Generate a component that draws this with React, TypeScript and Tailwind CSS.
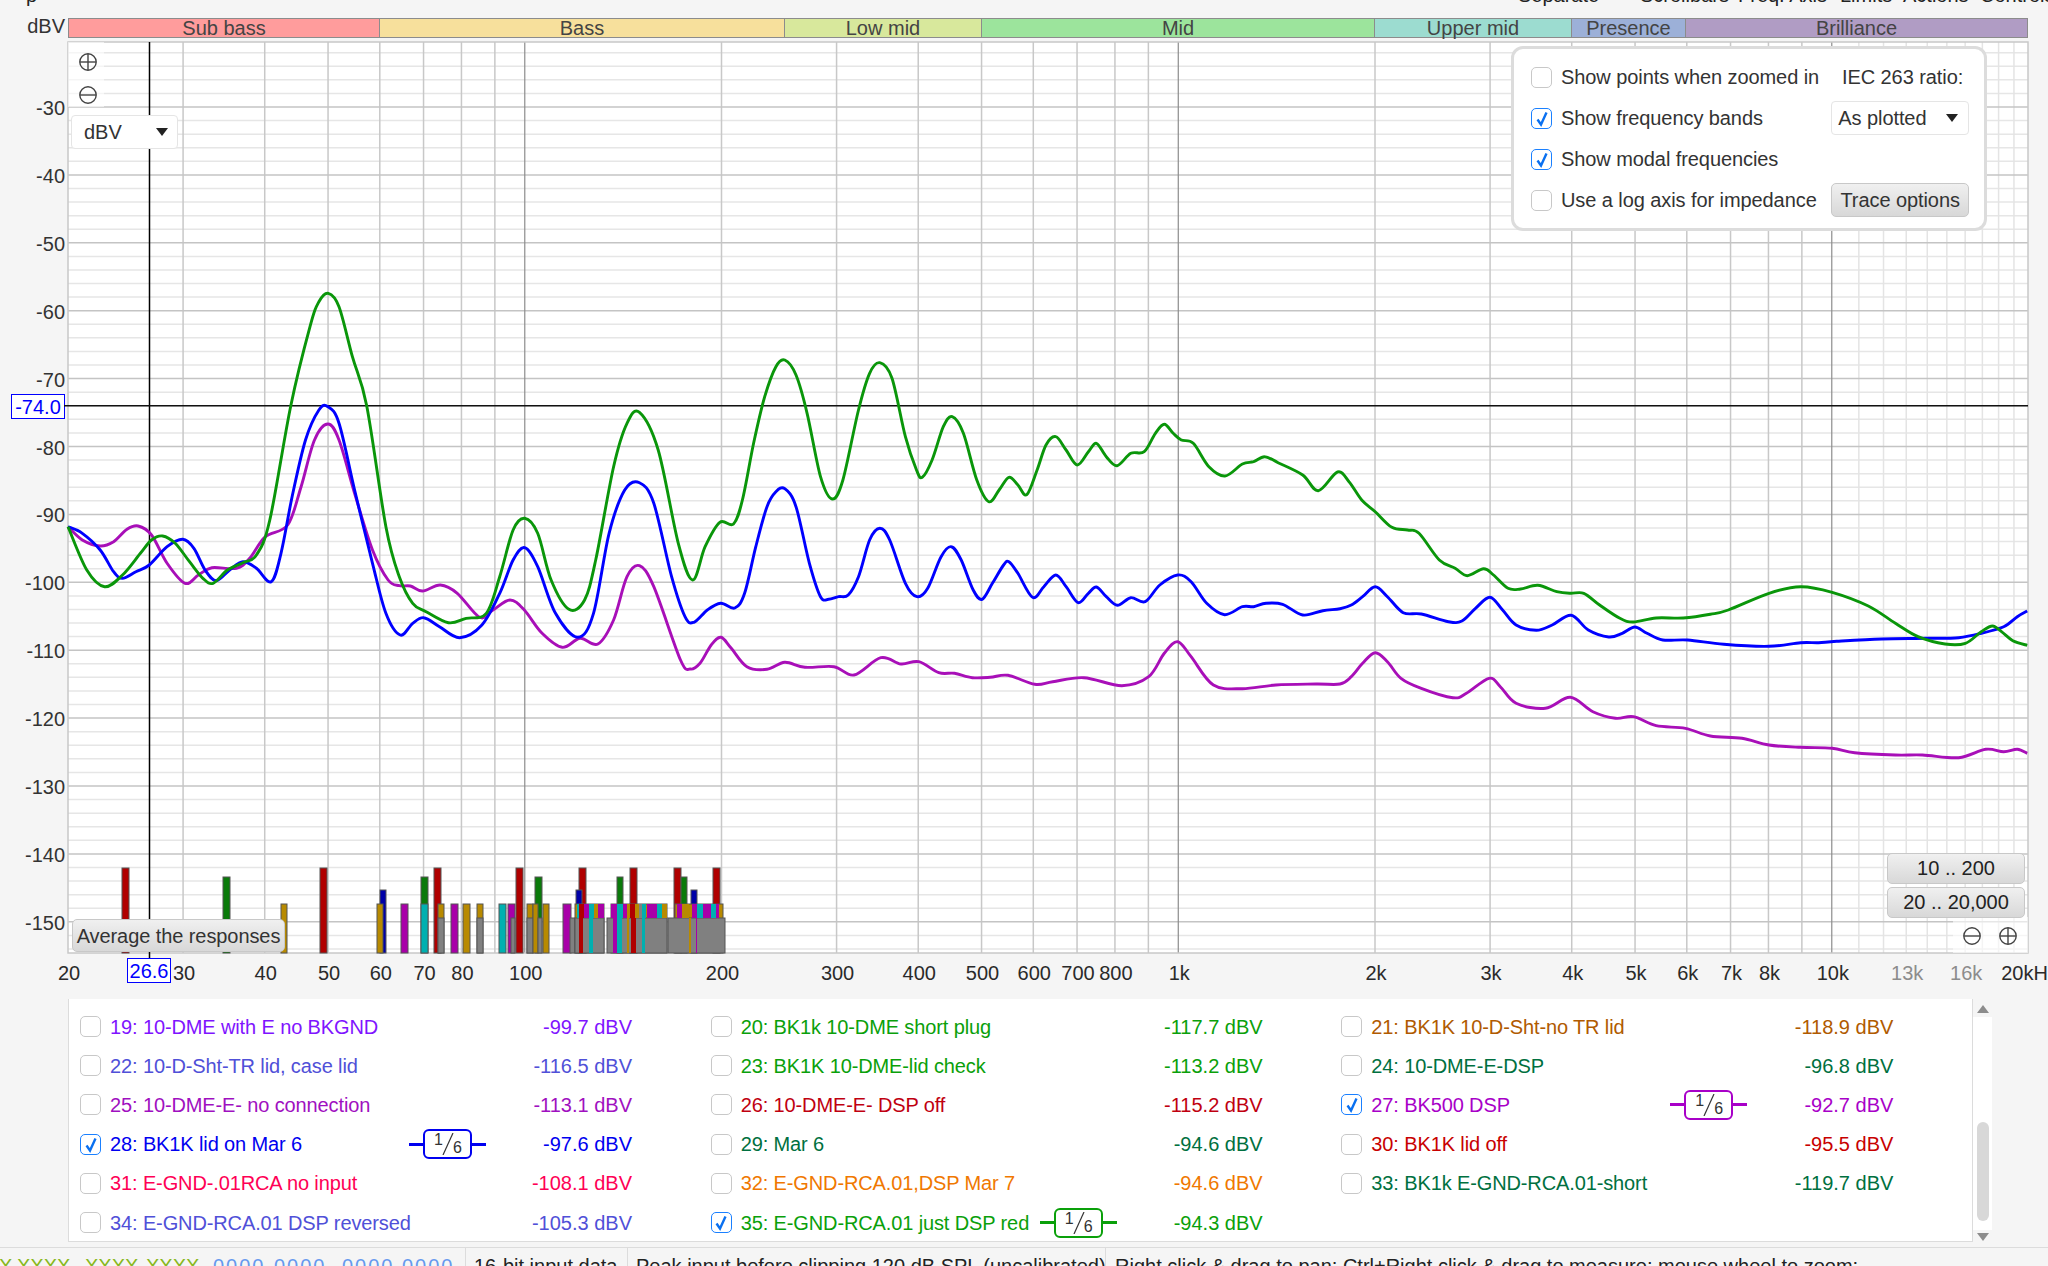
import React from 'react';

// plot geometry in page pixels
const PLOT_LEFT = 68;
const PLOT_RIGHT = 2028;
const PLOT_TOP = 42;
const PLOT_BOTTOM = 953;

const fx = (f: number) => 68 + 653.5 * Math.log10(f / 20);
const dy = (db: number) => 107 + (-30 - db) * 6.79;

const BANDS = [
  { name: 'Sub bass', cls: 'w-[312px] bg-[#ff9c9c]' },
  { name: 'Bass', cls: 'w-[405px] bg-[#f7e09c]' },
  { name: 'Low mid', cls: 'w-[197px] bg-[#d8e89c]' },
  { name: 'Mid', cls: 'w-[393px] bg-[#9ce49c]' },
  { name: 'Upper mid', cls: 'w-[197px] bg-[#9cdcd0]' },
  { name: 'Presence', cls: 'w-[114px] bg-[#9cb0d8]' },
  { name: 'Brilliance', cls: 'w-[342px] bg-[#b09cc4]' },
];

const X_TICKS: { t: string; f: number; dim?: boolean }[] = [
  { t: '20', f: 20 }, { t: '30', f: 30 }, { t: '40', f: 40 }, { t: '50', f: 50 }, { t: '60', f: 60 },
  { t: '70', f: 70 }, { t: '80', f: 80 }, { t: '100', f: 100 }, { t: '200', f: 200 }, { t: '300', f: 300 },
  { t: '400', f: 400 }, { t: '500', f: 500 }, { t: '600', f: 600 }, { t: '700', f: 700 }, { t: '800', f: 800 },
  { t: '1k', f: 1000 }, { t: '2k', f: 2000 }, { t: '3k', f: 3000 }, { t: '4k', f: 4000 }, { t: '5k', f: 5000 },
  { t: '6k', f: 6000 }, { t: '7k', f: 7000 }, { t: '8k', f: 8000 }, { t: '10k', f: 10000 },
  { t: '13k', f: 13000, dim: true }, { t: '16k', f: 16000, dim: true }, { t: '20kHz', f: 20000 },
];

// traces were read off three crops of the reference, so each run keeps its crop's origin
type Run = { ox: number; oy: number; sx: number; p: number[] };
const toPoints = (runs: Run[]) =>
  runs.flatMap((r) => {
    const out: [number, number][] = [];
    for (let i = 0; i < r.p.length; i += 2) out.push([r.ox + r.p[i] / r.sx, r.oy + r.p[i + 1] / 3]);
    return out;
  });

const A = { ox: 60, oy: 260, sx: 2.24 };
const B = { ox: 700, oy: 320, sx: 2.24 };
const C = { ox: 1340, oy: 480, sx: 2.2147 };

const GREEN = toPoints([
  { ...A, p: [18,800,60,930,100,980,140,945,180,880,205,840,230,828,258,850,290,905,320,955,343,970,375,930,410,908,440,885,470,780,517,437,560,200,580,125,601,100,625,140,655,290,687,437,730,800,760,950,790,1030,820,1055,870,1088,910,1075,955,1060,985,950,1015,810,1041,775,1070,820,1100,960,1140,1048,1175,1020,1200,900,1240,620,1270,490,1298,457,1340,570,1385,850,1417,960,1445,860,1478,787] },
  { ...B, p: [75,612,95,540,120,370,145,230,170,140,190,120,215,165,240,280,270,470,296,537,320,480,355,270,380,160,403,128,430,175,460,350,485,450,498,472,520,420,545,320,565,290,590,340,620,480,647,545,670,510,692,472,712,495,732,524,755,450,775,375,797,350,820,390,845,435,870,395,888,370,910,410,934,437,965,400,995,395,1020,340,1040,313,1060,340,1078,360,1105,370,1140,440,1176,468,1215,432,1240,425,1265,410,1295,428,1350,465,1385,512,1428,456] },
  { ...C, p: [20,5,48,60,78,95,115,142,150,150,175,160,220,240,255,265,282,287,318,266,340,285,372,325,400,327,438,316,480,335,510,340,540,340,575,375,620,415,650,426,700,414,760,414,820,403,860,390,950,340,1020,320,1090,337,1170,378,1230,430,1280,470,1340,492,1385,490,1420,455,1445,438,1465,455,1490,482,1522,496] },
]);

const BLUE = toPoints([
  { ...A, p: [18,800,50,820,90,870,120,935,140,955,170,935,200,915,240,860,275,838,300,865,325,930,350,962,380,930,410,905,440,925,473,965,495,880,520,710,550,540,580,450,600,440,625,490,660,690,700,910,730,1060,762,1125,790,1090,815,1073,850,1100,895,1133,945,1095,985,1000,1015,900,1041,863,1070,920,1110,1060,1160,1132,1195,1060,1230,820,1265,690,1298,668,1330,730,1370,950,1400,1070,1420,1087,1450,1050,1480,1030] },
  { ...B, p: [78,864,100,820,125,680,150,560,170,515,190,506,215,560,245,730,270,830,288,838,310,830,332,825,355,770,380,660,403,625,425,660,460,790,486,830,510,805,540,710,563,680,585,720,612,810,632,838,655,790,680,735,692,725,712,760,745,832,770,800,797,765,820,800,847,848,870,820,888,801,910,830,935,856,965,833,997,845,1030,795,1070,765,1100,785,1135,850,1175,884,1215,860,1240,860,1268,850,1305,853,1350,885,1395,872] },
  { ...C, p: [0,386,25,375,50,350,78,320,105,350,140,398,180,402,240,425,270,423,300,385,332,352,360,390,390,435,435,451,470,435,512,406,550,450,595,471,625,460,653,441,680,460,715,480,770,480,850,493,950,499,1020,488,1060,488,1100,484,1200,477,1300,475,1370,473,1420,460,1470,440,1500,410,1522,393] },
]);

const PURPLE = toPoints([
  { ...A, p: [18,800,50,840,90,858,120,845,150,808,175,798,205,825,240,910,280,970,310,945,340,923,395,925,425,895,460,830,510,795,540,680,570,540,600,492,625,540,660,700,700,870,735,960,760,977,785,978,812,993,852,975,890,1000,940,1072,970,1050,1008,1020,1040,1050,1080,1120,1125,1162,1165,1135,1205,1152,1240,1080,1270,950,1298,917,1330,980,1390,1200,1412,1227] },
  { ...B, p: [0,1030,25,975,47,952,70,985,105,1040,150,1048,190,1027,235,1042,300,1040,345,1065,405,1013,450,1032,490,1025,535,1058,570,1060,610,1073,650,1072,690,1066,750,1093,790,1085,860,1073,945,1097,1005,1070,1040,1000,1070,965,1100,1010,1150,1095,1215,1106,1290,1095,1380,1092] },
  { ...C, p: [0,612,25,590,50,550,78,518,105,545,135,595,180,625,250,653,280,640,330,595,355,620,390,670,455,685,510,652,560,695,610,715,650,710,700,737,765,745,820,768,890,775,950,795,1020,802,1090,805,1140,818,1230,825,1290,825,1370,833,1430,808,1470,815,1500,808,1522,820] },
]);

// catmull-rom through the read points
function smooth(pts: [number, number][]) {
  let d = `M${pts[0][0].toFixed(1)} ${pts[0][1].toFixed(1)}`;
  for (let i = 0; i < pts.length - 1; i++) {
    const p0 = pts[Math.max(i - 1, 0)];
    const p1 = pts[i];
    const p2 = pts[i + 1];
    const p3 = pts[Math.min(i + 2, pts.length - 1)];
    const c1x = p1[0] + (p2[0] - p0[0]) / 6;
    const c1y = p1[1] + (p2[1] - p0[1]) / 6;
    const c2x = p2[0] - (p3[0] - p1[0]) / 6;
    const c2y = p2[1] - (p3[1] - p1[1]) / 6;
    d += `C${c1x.toFixed(1)} ${c1y.toFixed(1)} ${c2x.toFixed(1)} ${c2y.toFixed(1)} ${p2[0].toFixed(1)} ${p2[1].toFixed(1)}`;
  }
  return d;
}

const RED = '#b00000';
const GRN = '#0a7a0a';
const BLU = '#0000a8';
const ORG = '#b88a00';
const MAG = '#a800a8';
const CYA = '#00b0b0';
const GRY = '#808080';
const T_RED = 868;
const T_GRN = 877;
const T_BLU = 890;
const T_COL = 904;
const T_GRY = 918;

// modal frequency bars: x1, x2, top, colour
const BARS: [number, number, number, string][] = [
  [122, 129, T_RED, RED], [223, 230, T_GRN, GRN], [281, 287, T_COL, ORG], [320, 327, T_RED, RED],
  [380, 386, T_BLU, BLU], [377, 383, T_COL, ORG], [401, 408, T_COL, MAG],
  [421, 428, T_GRN, GRN], [421, 428, T_COL, CYA], [434, 441, T_RED, RED], [438, 444, T_COL, ORG], [438, 444, T_GRY, GRY],
  [451, 458, T_COL, MAG], [463, 470, T_COL, ORG], [477, 483, T_COL, ORG], [477, 483, T_GRY, GRY],
  [499, 506, T_COL, CYA], [508, 515, T_COL, MAG], [511, 515, T_GRY, GRY], [516, 523, T_RED, RED],
  [527, 533, T_COL, ORG], [527, 533, T_GRY, GRY], [535, 542, T_GRN, GRN], [533, 538, T_COL, ORG], [538, 542, T_GRY, GRY], [543, 549, T_COL, ORG],
  [563, 571, T_COL, MAG], [570, 575, T_GRY, GRY], [579, 586, T_RED, RED], [576, 582, T_BLU, BLU],
  [575, 604, T_COL, ORG], [575, 604, T_GRY, GRY],
  [617, 623, T_GRN, GRN], [630, 637, T_RED, RED], [674, 681, T_RED, RED], [681, 687, T_GRN, GRN], [691, 697, T_BLU, BLU], [713, 720, T_RED, RED],
  [611, 667, T_COL, ORG], [607, 667, T_GRY, GRY], [675, 723, T_COL, ORG], [668, 725, T_GRY, GRY],
];

// fills inside the dense blocks: a T_COL cell stops where the grey starts, a T_GRY cell runs down to the axis
const CELLS: [number, number, number, string][] = [
  [577, 582, T_COL, CYA], [579, 586, T_COL, RED], [584, 589, T_COL, MAG], [589, 594, T_COL, CYA], [594, 598, T_COL, ORG], [598, 604, T_COL, MAG],
  [579, 583, T_GRY, RED], [589, 593, T_GRY, CYA],
  [611, 617, T_COL, MAG], [617, 623, T_COL, CYA], [623, 627, T_COL, MAG], [627, 630, T_COL, ORG], [630, 635, T_COL, RED], [635, 639, T_COL, ORG], [639, 642, T_COL, GRY], [642, 646, T_COL, CYA], [647, 653, T_COL, MAG], [653, 657, T_COL, MAG], [657, 662, T_COL, CYA], [662, 667, T_COL, ORG],
  [613, 617, T_GRY, MAG], [617, 622, T_GRY, CYA], [627, 629, T_GRY, ORG], [631, 636, T_GRY, RED], [642, 645, T_GRY, CYA],
  [677, 682, T_COL, MAG], [682, 689, T_COL, ORG], [692, 697, T_COL, MAG], [697, 703, T_COL, CYA], [703, 711, T_COL, MAG], [711, 716, T_COL, CYA], [716, 719, T_COL, MAG],
  [689, 691, T_GRY, ORG], [696, 697, T_GRY, MAG],
];

type Row = { n: string; c: string; v: string; on?: boolean };
const ROWS: Row[] = [
  { n: '19: 10-DME with E no BKGND', c: 'text-[#7f14ff]', v: '-99.7 dBV' },
  { n: '20: BK1k 10-DME short plug', c: 'text-[#0aa00a]', v: '-117.7 dBV' },
  { n: '21: BK1K 10-D-Sht-no TR lid', c: 'text-[#b05a00]', v: '-118.9 dBV' },
  { n: '22: 10-D-Sht-TR lid, case lid', c: 'text-[#5050d8]', v: '-116.5 dBV' },
  { n: '23: BK1K 10-DME-lid check', c: 'text-[#0aa00a]', v: '-113.2 dBV' },
  { n: '24: 10-DME-E-DSP', c: 'text-[#007040]', v: '-96.8 dBV' },
  { n: '25: 10-DME-E- no connection', c: 'text-[#a010c0]', v: '-113.1 dBV' },
  { n: '26: 10-DME-E- DSP off', c: 'text-[#c00010]', v: '-115.2 dBV' },
  { n: '27: BK500 DSP', c: 'text-[#a800c8]', v: '-92.7 dBV', on: true },
  { n: '28: BK1K lid on Mar 6', c: 'text-[#0000f0]', v: '-97.6 dBV', on: true },
  { n: '29: Mar 6', c: 'text-[#007040]', v: '-94.6 dBV' },
  { n: '30: BK1K lid off', c: 'text-[#c80000]', v: '-95.5 dBV' },
  { n: '31: E-GND-.01RCA no input', c: 'text-[#ff0055]', v: '-108.1 dBV' },
  { n: '32: E-GND-RCA.01,DSP Mar 7', c: 'text-[#f07800]', v: '-94.6 dBV' },
  { n: '33: BK1k E-GND-RCA.01-short', c: 'text-[#007040]', v: '-119.7 dBV' },
  { n: '34: E-GND-RCA.01 DSP reversed', c: 'text-[#5050d8]', v: '-105.3 dBV' },
  { n: '35: E-GND-RCA.01 just DSP red', c: 'text-[#0aa00a]', v: '-94.3 dBV', on: true },
];

const BADGE: Record<string, { line: string; box: string }> = {
  '27': { line: 'bg-[#a800c8]', box: 'border-[#a800c8]' },
  '28': { line: 'bg-[#0000f0]', box: 'border-[#0000f0]' },
  '35': { line: 'bg-[#0aa00a]', box: 'border-[#0aa00a]' },
};

function CheckBox({ on }: { on?: boolean }) {
  return (
    <span
      className={`flex h-[21px] w-[21px] shrink-0 items-center justify-center rounded-[5px] border-[1.5px] bg-white ${
        on ? 'border-[#1a80ff]' : 'border-[#c8c8c8]'
      }`}
    >
      {on && (
        <svg width="14" height="17" viewBox="0 0 14 17">
          <path d="M2.5 9.5 L6 14.5 L11.5 2.5" fill="none" stroke="#0a70f0" strokeWidth="2.4" />
        </svg>
      )}
    </span>
  );
}

function Zoomer({ kind }: { kind: 'plus' | 'minus' }) {
  return (
    <svg width="20" height="20" viewBox="0 0 20 20">
      <circle cx="10" cy="10" r="8.2" fill="none" stroke="#444" strokeWidth="1.4" />
      <path d="M2 10 H18" stroke="#444" strokeWidth="1.4" />
      {kind === 'plus' && <path d="M10 2 V18" stroke="#444" strokeWidth="1.4" />}
    </svg>
  );
}

function Caret() {
  return (
    <svg width="12" height="8" viewBox="0 0 12 8">
      <path d="M0 0 H12 L6 8 Z" fill="#222" />
    </svg>
  );
}

function Smoothing({ id }: { id: string }) {
  const b = BADGE[id];
  return (
    <div className="flex w-[77px] items-center">
      <span className={`h-[3px] w-[14px] ${b.line}`} />
      <span className={`relative h-[30px] w-[49px] rounded-[6px] border-[2.5px] ${b.box} bg-white text-[16px] leading-none text-[#333]`}>
        <span className="absolute left-[9px] top-[1px]">1</span>
        <svg className="absolute left-[16px] top-[2px]" width="14" height="22" viewBox="0 0 14 22">
          <path d="M12 0 L2 22" stroke="#333" strokeWidth="1.2" />
        </svg>
        <span className="absolute left-[28px] top-[9px]">6</span>
      </span>
      <span className={`h-[3px] w-[14px] ${b.line}`} />
    </div>
  );
}

const GRAY_BTN = 'flex items-center justify-center rounded-[5px] border border-[#c8c8c8] bg-gradient-to-b from-[#f0f0f0] to-[#d8d8d8] text-[20px] text-[#222]';

export default function App() {
  const minor: number[] = [];
  for (let db = -22; db >= -154; db -= 2) if (db % 10 !== 0) minor.push(db);
  const major: number[] = [];
  for (let db = -30; db >= -150; db -= 10) major.push(db);
  const vNormal = [30, 40, 50, 60, 70, 80, 90, 200, 300, 400, 500, 600, 700, 800, 900, 2000, 3000, 4000, 5000, 6000, 7000, 8000, 9000];
  const vDecade = [100, 1000, 10000];
  const vLight = [11000, 12000, 13000, 14000, 15000, 16000, 17000, 18000, 19000];

  return (
    <div className="flex h-screen w-screen flex-col overflow-hidden bg-[#f5f5f5] font-['Liberation_Sans',Arial,sans-serif] text-[20px] text-[#333]">
      {/* menu strip, cut off by the top of the window */}
      <div className="flex h-[18px] shrink-0 whitespace-nowrap leading-[23px] text-[#222]">
        <span className="-mt-[16px] ml-[26px] w-[1492px] shrink-0">p</span>
        <span className="-mt-[16px] w-[122px] shrink-0">Separate</span>
        <span className="-mt-[16px] w-[98px] shrink-0">Scrollbars</span>
        <span className="-mt-[16px] w-[102px] shrink-0">Freq. Axis</span>
        <span className="-mt-[16px] w-[63px] shrink-0">Limits</span>
        <span className="-mt-[16px] w-[77px] shrink-0">Actions</span>
        <span className="-mt-[16px] shrink-0">Controls</span>
      </div>

      {/* frequency bands */}
      <div className="flex h-[20px] shrink-0">
        <div className="w-[68px] pr-[3px] text-right leading-[17px] text-[#333]">dBV</div>
        <div className="flex w-[1960px]">
          {BANDS.map((b) => (
            <div
              key={b.name}
              className={`${b.cls} border border-l-0 border-[#8c8c8c] first:border-l text-center leading-[18px] text-[#444]`}
            >
              {b.name}
            </div>
          ))}
        </div>
      </div>

      {/* plot */}
      <div className="mt-[4px] flex h-[911px] shrink-0">
        <div className="relative w-[68px] shrink-0">
          {major.map((db) => (
            <span
              key={db}
              className="absolute right-[3px] -translate-y-1/2 leading-none text-[#333]"
              style={{ top: dy(db) - PLOT_TOP + 1 }}
            >
              {db}
            </span>
          ))}
          <span className="absolute left-[11px] top-[352px] flex h-[25px] w-[54px] items-center justify-center border border-[#0000ff] bg-white text-[#0000ff]">
            -74.0
          </span>
        </div>

        <div className="relative w-[1960px] shrink-0 bg-white">
          <svg
            className="absolute inset-0 overflow-visible"
            width="1960"
            height="911"
            viewBox={`${PLOT_LEFT} ${PLOT_TOP} 1960 911`}
          >
            {minor.map((db) => (
              <line key={db} x1={PLOT_LEFT} x2={PLOT_RIGHT} y1={dy(db)} y2={dy(db)} stroke="#e6e6e6" strokeWidth="1.5" />
            ))}
            {vLight.map((f) => (
              <line key={f} x1={fx(f)} x2={fx(f)} y1={PLOT_TOP} y2={PLOT_BOTTOM} stroke="#e4e4e4" strokeWidth="1.5" />
            ))}
            {vNormal.map((f) => (
              <line key={f} x1={fx(f)} x2={fx(f)} y1={PLOT_TOP} y2={PLOT_BOTTOM} stroke="#c8c8c8" strokeWidth="1.5" />
            ))}
            {major.map((db) => (
              <line key={db} x1={PLOT_LEFT} x2={PLOT_RIGHT} y1={dy(db)} y2={dy(db)} stroke="#c4c4c4" strokeWidth="1.5" />
            ))}
            {vDecade.map((f) => (
              <line key={f} x1={fx(f)} x2={fx(f)} y1={PLOT_TOP} y2={PLOT_BOTTOM} stroke="#8c8c8c" strokeWidth="1.2" />
            ))}
            <rect x={PLOT_LEFT} y={PLOT_TOP} width="1960" height="911" fill="none" stroke="#c8c8c8" strokeWidth="1.5" />

            {BARS.map(([a, b, top, col], i) => (
              <rect key={i} x={a} y={top} width={b - a} height={PLOT_BOTTOM - top} fill={col} stroke="#555" strokeWidth="1" />
            ))}
            {CELLS.map(([a, b, top, col], i) => (
              <rect key={i} x={a} y={top} width={b - a} height={(top === T_COL ? T_GRY : PLOT_BOTTOM) - top} fill={col} />
            ))}

            <line x1="149.5" x2="149.5" y1={PLOT_TOP} y2="958" stroke="#000" strokeWidth="1.5" />
            <line x1={PLOT_LEFT - 4} x2={PLOT_RIGHT} y1="405.7" y2="405.7" stroke="#111" strokeWidth="1.5" />

            <path d={smooth(PURPLE)} fill="none" stroke="#a80fb8" strokeWidth="2.9" strokeLinejoin="round" />
            <path d={smooth(BLUE)} fill="none" stroke="#0000ff" strokeWidth="2.9" strokeLinejoin="round" />
            <path d={smooth(GREEN)} fill="none" stroke="#0a960a" strokeWidth="2.9" strokeLinejoin="round" />
          </svg>

          {/* y zoom controls */}
          <div className="absolute left-0 top-0 flex h-[65px] w-[36px] flex-col items-center gap-[13px] bg-white/60 pl-[3px] pt-[10px]">
            <Zoomer kind="plus" />
            <Zoomer kind="minus" />
          </div>
          <div className="absolute left-[3px] top-[73px] flex h-[34px] w-[107px] items-center justify-between rounded-[4px] border border-[#e5e5e5] bg-white pl-[12px] pr-[9px]">
            <span>dBV</span>
            <Caret />
          </div>

          {/* options panel */}
          <div className="absolute left-[1443px] top-[4px] h-[185px] w-[476px] rounded-[12px] border-[3px] border-[#dcdcdc] bg-white pl-[17px] pr-[15px]">
            <div className="flex h-full flex-col justify-center tracking-[-0.08px] text-[#333]">
              <div className="flex h-[41px] items-center gap-[9px]">
                <CheckBox />
                <span className="w-[272px] whitespace-nowrap">Show points when zoomed in</span>
                <span className="whitespace-nowrap">IEC 263 ratio:</span>
              </div>
              <div className="flex h-[41px] items-center gap-[9px]">
                <CheckBox on />
                <span className="w-[262px] whitespace-nowrap">Show frequency bands</span>
                <div className="flex h-[34px] w-[138px] items-center justify-between rounded-[4px] border border-[#e5e5e5] bg-white pl-[6px] pr-[10px]">
                  <span>As plotted</span>
                  <Caret />
                </div>
              </div>
              <div className="flex h-[41px] items-center gap-[9px]">
                <CheckBox on />
                <span className="whitespace-nowrap">Show modal frequencies</span>
              </div>
              <div className="flex h-[41px] items-center gap-[9px]">
                <CheckBox />
                <span className="w-[262px] whitespace-nowrap">Use a log axis for impedance</span>
                <button className={`${GRAY_BTN} h-[34px] w-[138px] text-[#333]`}>Trace options</button>
              </div>
            </div>
          </div>

          {/* range buttons */}
          <div className="absolute bottom-0 right-0 flex w-[75px] justify-center gap-[16px] bg-white/60 pb-[7px] pr-[2px] pt-[9px]">
            <Zoomer kind="minus" />
            <Zoomer kind="plus" />
          </div>
          <div className="absolute left-[1819px] top-[811px] flex w-[138px] flex-col gap-[3px]">
            <button className={`${GRAY_BTN} h-[31px] pb-[2px]`}>10 .. 200</button>
            <button className={`${GRAY_BTN} h-[31px] pb-[2px]`}>20 .. 20,000</button>
          </div>

          <button className={`${GRAY_BTN} absolute left-[4px] top-[877px] h-[33px] w-[213px] tracking-[-0.08px] text-[#333]`}>
            Average the responses
          </button>
        </div>
      </div>

      {/* frequency axis */}
      <div className="relative h-[46px] shrink-0">
        {X_TICKS.map((t) => (
          <span
            key={t.t}
            className={`absolute top-[5px] -translate-x-1/2 whitespace-nowrap ${t.dim ? 'text-[#8c8c8c]' : 'text-[#2a2a2a]'}`}
            style={{ left: fx(t.f) + 1 }}
          >
            {t.t}
          </span>
        ))}
        <span className="absolute left-[127px] top-[5px] flex h-[25px] w-[44px] items-center justify-center border border-[#0000ff] bg-white text-[#0000ff]">
          26.6
        </span>
      </div>

      {/* trace list */}
      <div className="flex h-[243px] shrink-0 pl-[68px]">
        <div className="grid h-full w-[1905px] grid-cols-3 content-start border-x border-b border-[#dcdcdc] bg-white pl-[11px] pt-[8px]">
          {ROWS.map((r) => {
            const id = r.n.slice(0, 2);
            return (
              <div key={id} className={`flex h-[39.2px] items-center ${r.c}`}>
                <div className="flex w-[552px] items-center">
                  <CheckBox on={r.on} />
                  <span className="ml-[9px] w-[299px] whitespace-nowrap tracking-[-0.12px]">{r.n}</span>
                  {BADGE[id] ? <Smoothing id={id} /> : <span className="w-[77px]" />}
                  <span className="flex-1 whitespace-nowrap text-right">{r.v}</span>
                </div>
              </div>
            );
          })}
        </div>
        <div className="flex h-full w-[19px] flex-col items-center">
          <svg className="mt-[6px]" width="12" height="8" viewBox="0 0 12 8">
            <path d="M0 8 H12 L6 0 Z" fill="#8c8c8c" />
          </svg>
          <div className="mt-[4px] h-[213px] w-full bg-white pl-[4px] pt-[105px]">
            <div className="h-[99px] w-[12px] rounded-full bg-[#d8d8d8]" />
          </div>
          <svg className="mt-[3px]" width="12" height="8" viewBox="0 0 12 8">
            <path d="M0 0 H12 L6 8 Z" fill="#8c8c8c" />
          </svg>
        </div>
      </div>

      {/* status bar, cut off by the bottom of the window */}
      <div className="mt-[5px] flex h-[19px] shrink-0 whitespace-nowrap border-t border-[#dcdcdc] leading-[23px] text-[#222]">
        <div className="flex w-[466px] shrink-0 border-r border-[#dcdcdc] pt-[7px]">
          <span className="-ml-[1px] w-[18px] text-[#88b820]">X</span>
          <span className="w-[68px] text-[#88b820]">XXXX</span>
          <span className="w-[61px] text-[#88b820]">XXXX</span>
          <span className="w-[67px] text-[#88b820]">XXXX</span>
          <span className="w-[61px] tracking-[2px] text-[#6699ee]">0000</span>
          <span className="w-[68px] tracking-[2px] text-[#6699ee]">0000</span>
          <span className="w-[60px] tracking-[2px] text-[#6699ee]">0000</span>
          <span className="tracking-[2px] text-[#6699ee]">0000</span>
        </div>
        <div className="w-[162px] shrink-0 border-r border-[#dcdcdc] pl-[8px] pt-[7px]">16-bit input data</div>
        <div className="w-[478px] shrink-0 border-r border-[#dcdcdc] pl-[8px] pt-[7px]">Peak input before clipping 120 dB SPL (uncalibrated)</div>
        <div className="pl-[9px] pt-[7px]">Right click &amp; drag to pan; Ctrl+Right click &amp; drag to measure; mouse wheel to zoom;</div>
      </div>
    </div>
  );
}
